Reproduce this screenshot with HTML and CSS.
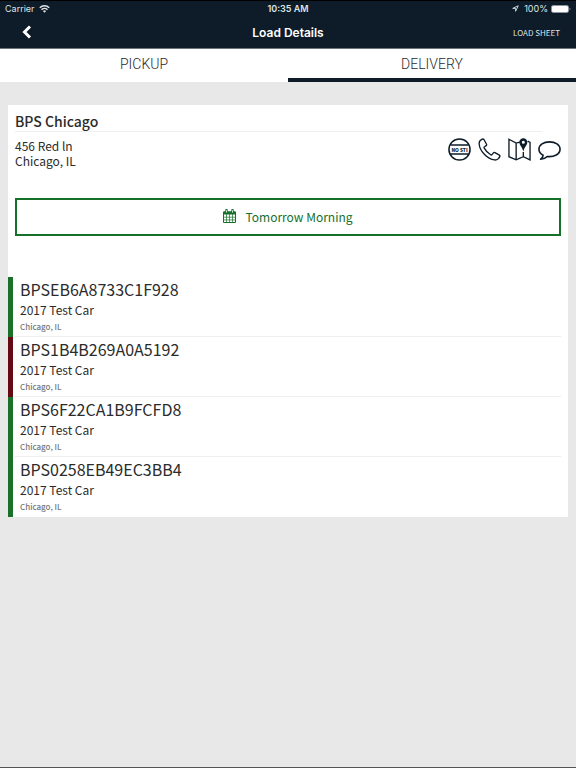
FILE: index.html
```html
<!DOCTYPE html>
<html lang="en">
<head>
    <meta charset="UTF-8">
    <meta name="viewport" content="width=device-width, initial-scale=1.0">
    <title>Load Details</title>
    <link rel="stylesheet" href="styles.css">
</head>
<body>
    <header class="header">
        <!-- Status bar -->
        <div class="status-bar">
            <div class="status-left">
                <span>Carrier</span>
                <svg class="wifi" viewBox="0 0 22 16" aria-hidden="true">
                    <path d="M1.5 5.5a13.5 13.5 0 0 1 19 0M5 9.3a8.6 8.6 0 0 1 12 0" fill="none" stroke="currentColor" stroke-width="2.8"/>
                    <path d="M7.8 12.2a4.6 4.6 0 0 1 6.4 0L11 15.5z" fill="currentColor"/>
                </svg>
            </div>
            <span class="clock">10:35 AM</span>
            <div class="status-right">
                <svg class="location" viewBox="0 0 14 14" aria-hidden="true">
                    <path d="M1.5 6.8L12.5 1.5L7.2 12.5V6.8z" fill="none" stroke="currentColor" stroke-width="1.8"/>
                </svg>
                <span>100%</span>
                <svg class="battery" viewBox="0 0 20 8" aria-hidden="true">
                    <rect x="0.5" y="0.5" width="17" height="7" rx="1.5" fill="none" stroke="#8b949b"/>
                    <rect x="1" y="1" width="16" height="6" rx="1" fill="#fff"/>
                    <path d="M18.5 2.8v2.4q1-.4 1-1.2t-1-1.2" fill="#8b949b"/>
                </svg>
            </div>
        </div>
        <!-- Navigation bar -->
        <div class="nav-bar">
            <button class="back" type="button" aria-label="Back">
                <svg viewBox="0 0 10 14" aria-hidden="true">
                    <path d="M8 1.5L2.5 7L8 12.5" fill="none" stroke="currentColor" stroke-width="3"/>
                </svg>
            </button>
            <h1>Load Details</h1>
            <a class="load-sheet" href="#">LOAD SHEET</a>
        </div>
    </header>

    <nav class="tabs">
        <a class="tab" href="#">PICKUP</a>
        <a class="tab active" href="#">DELIVERY</a>
    </nav>

    <main class="content">
        <!-- Stop details -->
        <section class="stop">
            <h2>BPS Chicago</h2>
            <div class="stop-info">
                <div class="address">
                    <p>456 Red ln</p>
                    <p>Chicago, IL</p>
                </div>
                <div class="actions">
                    <button type="button" aria-label="No STI">
                        <svg viewBox="0 0 24 24" aria-hidden="true">
                            <g fill="none" stroke="currentColor" stroke-width="1.6">
                                <circle cx="12" cy="12" r="11"/>
                                <path d="M2.4 7.3h19.2M2.4 16.7h19.2"/>
                            </g>
                            <text x="12" y="14.1" text-anchor="middle">NO STI</text>
                        </svg>
                    </button>
                    <button type="button" aria-label="Call">
                        <svg viewBox="0 0 24 24" aria-hidden="true">
                            <path d="M4.3 1.2C2.3 2.2 1 3.9 1.2 6.2C1.8 13.6 9.6 21.8 17.3 22.9C19.7 23.2 21.8 21.6 22.8 19.4C23 18.8 22.8 18.2 22.3 17.9L17.7 15.2C17.1 14.9 16.5 15 16.1 15.5L14.6 17.3C14.2 17.7 13.7 17.8 13.2 17.5C10.3 15.8 8 13.4 6.5 10.6C6.2 10 6.3 9.5 6.8 9.2L8.5 8C9 7.7 9.1 7.1 8.9 6.5L6.3 1.8C5.8 1 5.1 .8 4.3 1.2z" fill="none" stroke="currentColor" stroke-width="1.4" stroke-linejoin="round"/>
                        </svg>
                    </button>
                    <button type="button" aria-label="Map">
                        <svg viewBox="0 0 24 24" aria-hidden="true">
                            <path d="M12.4 4.2L8.5 5.3L1 1.3V19.5L8.5 22.8L16 19.5L23 22.8V4.5L20.5 3.3M8.5 5.3V22.8M16 14.5V19.5" fill="none" stroke="currentColor" stroke-width="1.4"/>
                            <path d="M16 .2C13.5 .2 11.8 2 11.8 4.4C11.8 7.4 14.9 9.4 16 14C17.1 9.4 20.2 7.4 20.2 4.4C20.2 2 18.5 .2 16 .2zM16 2.9a1.6 1.6 0 1 1 0 3.2a1.6 1.6 0 1 1 0-3.2" fill="currentColor" fill-rule="evenodd"/>
                        </svg>
                    </button>
                    <button type="button" aria-label="Message">
                        <svg viewBox="0 0 24 24" aria-hidden="true">
                            <path d="M12 4C5.8 4 1 7.3 1 11.7C1 14.4 2.7 16.5 5.3 18C5.3 19.6 4.4 21 2.8 22.2C5.9 22 8.1 20.9 9.6 19.3C17 20 23 16.9 23 11.7C23 7.3 18.2 4 12 4z" fill="none" stroke="currentColor" stroke-width="1.7" stroke-linejoin="round"/>
                        </svg>
                    </button>
                </div>
            </div>
            <button class="schedule" type="button">
                <svg viewBox="0 0 13 14" aria-hidden="true">
                    <path d="M.5 3h12v10.5h-12z" fill="none" stroke="currentColor"/>
                    <path d="M.5 2.5h12v3H.5z" fill="currentColor"/>
                    <path d="M3.5 5v8.5M6.5 5v8.5M9.5 5v8.5M.5 8.2h12M.5 10.9h12" stroke="currentColor" stroke-width=".7"/>
                    <path d="M3.5 1v2.8M9.5 1v2.8" stroke="currentColor" stroke-width="2.4" stroke-linecap="round"/>
                    <path d="M3.5 1.2v2.4M9.5 1.2v2.4" stroke="#fff" stroke-width=".8"/>
                </svg>
                Tomorrow Morning
            </button>
        </section>

        <!-- Vehicles -->
        <ul class="vehicles">
            <li class="vehicle">
                <div class="vehicle-body">
                    <h3>BPSEB6A8733C1F928</h3>
                    <p class="model">2017 Test Car</p>
                    <p class="city">Chicago, IL</p>
                </div>
            </li>
            <li class="vehicle damaged">
                <div class="vehicle-body">
                    <h3>BPS1B4B269A0A5192</h3>
                    <p class="model">2017 Test Car</p>
                    <p class="city">Chicago, IL</p>
                </div>
            </li>
            <li class="vehicle">
                <div class="vehicle-body">
                    <h3>BPS6F22CA1B9FCFD8</h3>
                    <p class="model">2017 Test Car</p>
                    <p class="city">Chicago, IL</p>
                </div>
            </li>
            <li class="vehicle">
                <div class="vehicle-body">
                    <h3>BPS0258EB49EC3BB4</h3>
                    <p class="model">2017 Test Car</p>
                    <p class="city">Chicago, IL</p>
                </div>
            </li>
        </ul>
    </main>
</body>
</html>
```
FILE: styles.css
```css
* {
    box-sizing: border-box;
}

body, h1, h2, h3, p, ul, button {
    margin: 0;
    padding: 0;
}

body {
    display: flex;
    flex-direction: column;
    min-height: 100vh;
    background: #e8e8e8;
    border-bottom: 1px solid #555;
    color: #2b2b2b;
    font-family: "Noto Sans CJK JP", "Noto Sans", sans-serif;
}

button {
    background: none;
    border: none;
    color: inherit;
    font-family: inherit;
    cursor: pointer;
}

a {
    color: inherit;
    text-decoration: none;
}

svg {
    display: block;
}

/* Header */
.header {
    background: #0d1c28;
    border-top: 1px solid #000;
    border-bottom: 1px solid #6b757d;
    color: #fff;
    font-family: Inter, sans-serif;
}

.status-bar, .nav-bar {
    display: grid;
    grid-template-columns: 1fr auto 1fr;
    align-items: center;
}

.status-bar {
    height: 15px;
    padding: 0 5px;
    color: #dfe3e6;
    font-size: 9px;
}

.status-left, .status-right {
    display: flex;
    align-items: center;
    gap: 4px;
}

.status-right {
    justify-content: flex-end;
    gap: 3px;
}

.wifi {
    width: 11px;
    height: 8px;
}

.clock {
    font-weight: 600;
}

.location {
    width: 7px;
    height: 7px;
    margin-right: 2px;
}

.battery {
    width: 20px;
    height: 8px;
}

.nav-bar {
    height: 32px;
    padding: 0 16px;
}

.back {
    justify-self: start;
    padding-left: 6px;
}

.back svg {
    width: 10px;
    height: 14px;
}

.nav-bar h1 {
    font-size: 12px;
    font-weight: 600;
}

.load-sheet {
    justify-self: end;
    color: #dfe3e6;
    font-family: "Noto Sans CJK JP", "Noto Sans", sans-serif;
    font-size: 8px;
}

/* Tabs */
.tabs {
    display: flex;
    background: #fff;
}

.tab {
    flex: 1;
    height: 33px;
    border-bottom: 4px solid #fff;
    font-family: Roboto, sans-serif;
    font-size: 14px;
    font-weight: 300;
    line-height: 30px;
    text-align: center;
}

.tab.active {
    border-color: #0d1c28;
}

/* Stop details */
.content {
    margin: 23px 8px 0;
    background: #fff;
}

.stop {
    padding: 7px 7px 41px;
}

.stop h2 {
    margin-right: 19px;
    padding-bottom: 1px;
    border-bottom: 1px solid #eee;
    font-size: 14px;
    font-weight: 500;
    line-height: 18px;
}

.stop-info {
    display: flex;
    justify-content: space-between;
    align-items: flex-start;
    padding-top: 6px;
}

.address {
    font-size: 12px;
    line-height: 15px;
}

.actions {
    display: flex;
    gap: 7px;
    color: #0d1c28;
}

.actions svg {
    width: 23px;
    height: 23px;
}

.actions text {
    fill: currentColor;
    font-size: 5px;
    font-weight: 900;
}

.schedule {
    display: flex;
    justify-content: center;
    align-items: center;
    gap: 9px;
    width: 100%;
    height: 38px;
    margin-top: 30px;
    padding-bottom: 2px;
    border: 2px solid #16702a;
    color: #16702a;
    font-size: 12px;
}

.schedule svg {
    width: 13px;
    height: 14px;
}

/* Vehicles */
.vehicles {
    list-style: none;
}

.vehicle {
    padding: 0 7px 0 2px;
    border-left: 5px solid #1a7029;
}

.vehicle.damaged {
    border-color: #650a14;
}

.vehicle-body {
    height: 60px;
    padding: 2px 5px 0;
    border-bottom: 1px solid #eee;
}

.vehicle:last-child .vehicle-body {
    border-bottom: none;
}

.vehicle h3 {
    font-size: 16px;
    font-weight: 400;
    line-height: 21px;
}

.model {
    font-size: 12px;
    line-height: 20px;
}

.city {
    color: #777;
    font-size: 8px;
    font-weight: 500;
    line-height: 13px;
}
```
